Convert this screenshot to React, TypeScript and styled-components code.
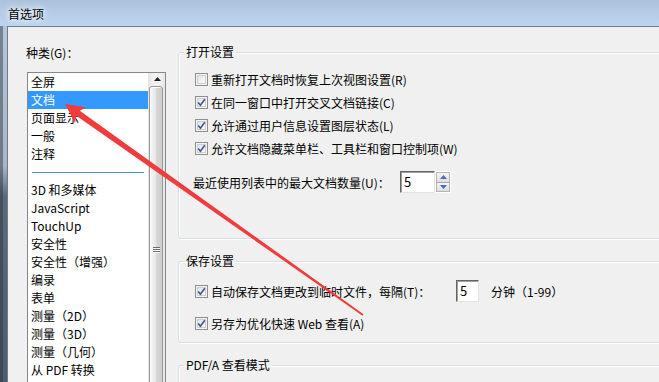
import React from 'react'
import styled, { createGlobalStyle } from 'styled-components'

const GlobalStyle = createGlobalStyle`
  html, body {
    margin: 0;
    padding: 0;
    overflow: hidden;
  }
  body {
    font-family: "Segoe UI", "Noto Sans CJK SC", sans-serif;
    font-size: 12px;
    color: #000;
  }
`

const categories = [
  '全屏',
  '文档',
  '页面显示',
  '一般',
  '注释',
  '-',
  '3D 和多媒体',
  'JavaScript',
  'TouchUp',
  '安全性',
  '安全性（增强）',
  '编录',
  '表单',
  '测量（2D）',
  '测量（3D）',
  '测量（几何）',
  '从 PDF 转换',
]

const openOptions = [
  { label: '重新打开文档时恢复上次视图设置(R)', checked: false },
  { label: '在同一窗口中打开交叉文档链接(C)', checked: true },
  { label: '允许通过用户信息设置图层状态(L)', checked: true },
  { label: '允许文档隐藏菜单栏、工具栏和窗口控制项(W)', checked: true },
]

const CheckBox: React.FC<{ checked: boolean }> = ({ checked }) => (
  <Box>
    {checked && (
      <svg width="9" height="9" viewBox="0 0 9 9">
        <path d="M1.2 4.6 L3.4 7.2 L7.8 1.2" fill="none" stroke="#3d5694" strokeWidth="1.6" />
      </svg>
    )}
  </Box>
)

const Spinner: React.FC = () => (
  <SpinBox>
    <SpinButton>
      <svg width="7" height="4" viewBox="0 0 7 4"><path d="M0 4 L3.5 0 L7 4 Z" fill="#5068b8" /></svg>
    </SpinButton>
    <SpinButton>
      <svg width="7" height="4" viewBox="0 0 7 4"><path d="M0 0 L3.5 4 L7 0 Z" fill="#5068b8" /></svg>
    </SpinButton>
  </SpinBox>
)

const App: React.FC = () => {
  return (
    <Window>
      <GlobalStyle />
      <TitleBar>
        <Title>首选项</Title>
      </TitleBar>
      <Body>
        <FrameEdge />
        <Client>
          <LeftColumn>
            <CategoryLabel>种类(G)：</CategoryLabel>
            <ListBox>
              <ListItems>
                {categories.map((c, i) =>
                  c === '-' ? (
                    <Separator key={i} />
                  ) : (
                    <ListItem key={i} $selected={c === '文档'}>{c}</ListItem>
                  )
                )}
              </ListItems>
              <ScrollBar>
                <ScrollButton>
                  <svg width="7" height="4" viewBox="0 0 7 4"><path d="M0 4 L3.5 0 L7 4 Z" fill="#202020" /></svg>
                </ScrollButton>
                <Thumb>
                  <Grip><span /><span /><span /></Grip>
                </Thumb>
              </ScrollBar>
            </ListBox>
          </LeftColumn>

          <RightColumn>
            <Group>
              <Legend>打开设置</Legend>
              <GroupInner $top={8} $bottom={45}>
                {openOptions.map((o) => (
                  <CheckRow key={o.label}>
                    <CheckBox checked={o.checked} />
                    <span>{o.label}</span>
                  </CheckRow>
                ))}
                <FieldRow>
                  <FieldLabel>最近使用列表中的最大文档数量(U)：</FieldLabel>
                  <NumberBox $width={35}>5</NumberBox>
                  <Spinner />
                </FieldRow>
              </GroupInner>
            </Group>

            <Group>
              <Legend>保存设置</Legend>
              <GroupInner $top={10} $bottom={7}>
                <SaveRow>
                  <SaveLabel>
                    <CheckBox checked />
                    <span>自动保存文档更改到临时文件，每隔(T)：</span>
                  </SaveLabel>
                  <NumberBox $width={23}>5</NumberBox>
                  <Unit>分钟（1-99）</Unit>
                </SaveRow>
                <CheckRow>
                  <CheckBox checked />
                  <span>另存为优化快速 Web 查看(A)</span>
                </CheckRow>
              </GroupInner>
            </Group>

            <Group>
              <Legend>PDF/A 查看模式</Legend>
              <GroupInner $top={10} $bottom={40} />
            </Group>
          </RightColumn>
        </Client>
      </Body>

      <ArrowLayer width="659" height="382" viewBox="0 0 659 382">
        <polygon
          points="65,104 86.5,107.5 79.8,110.8 363.5,314.3 362.5,315.7 76.3,115.7 75,123"
          fill="#f03c3c"
        />
      </ArrowLayer>
    </Window>
  )
}

export default App

const Window = styled.div`
  position: relative;
  width: 100vw;
  height: 100vh;
  overflow: hidden;
  display: flex;
  flex-direction: column;
  background: #f0f0f0;
`

const TitleBar = styled.div`
  height: 26px;
  flex-shrink: 0;
  display: flex;
  align-items: center;
  padding-left: 8px;
  background: linear-gradient(to bottom, #abc2da 0%, #b5cce6 45%, #bdd4ee 100%);
`

const Title = styled.div`
  font-size: 12px;
  line-height: 16px;
  color: #000;
  text-shadow: 0 0 5px #fff, 0 0 8px #fff;
  margin-top: 1px;
`

const Body = styled.div`
  flex: 1;
  display: flex;
`

const FrameEdge = styled.div`
  width: 7px;
  flex-shrink: 0;
  background: linear-gradient(to bottom, #b4c6d8 0%, #a9b6c3 140px, #5b6a78 170px, #4b5966 100%);
  box-shadow: inset 3px 0 0 rgba(40, 50, 60, 0.45);
`

const Client = styled.div`
  flex: 1;
  display: flex;
  align-items: flex-start;
  gap: 12px;
  padding: 17px 0 0 19px;
  border-top: 1px solid #6c7c8c;
  border-left: 1px solid #6c7c8c;
  background: #f0f0f0;
`

const LeftColumn = styled.div`
  display: flex;
  flex-direction: column;
  width: 139px;
  flex-shrink: 0;
`

const CategoryLabel = styled.div`
  height: 16px;
  line-height: 16px;
  margin: 1px 0 11px -1px;
`

const ListBox = styled.div`
  display: flex;
  height: 340px;
  background: #fff;
  border: 1px solid #828790;
  overflow: hidden;
`

const ListItems = styled.div`
  width: 120px;
  display: flex;
  flex-direction: column;
`

const ListItem = styled.div<{ $selected?: boolean }>`
  height: 18px;
  line-height: 18px;
  padding-left: 3px;
  white-space: nowrap;
  background: ${(p) => (p.$selected ? '#3399ff' : 'transparent')};
  color: ${(p) => (p.$selected ? '#fff' : '#000')};
`

const Separator = styled.div`
  height: 18px;
  display: flex;
  align-items: center;
  padding: 0 4px;

  &::after {
    content: '';
    flex: 1;
    height: 1px;
    background: #4a90dc;
  }
`

const ScrollBar = styled.div`
  width: 17px;
  display: flex;
  flex-direction: column;
  background: linear-gradient(to right, #e3e3e3, #f1f1f1 30%, #f1f1f1 70%, #e6e6e6);
`

const ScrollButton = styled.div`
  height: 18px;
  display: flex;
  align-items: center;
  justify-content: center;
  padding-left: 1px;
`

const Thumb = styled.div`
  margin: 1px 2px 0 1px;
  height: 494px;
  border: 1px solid #989898;
  border-radius: 3px;
  background: linear-gradient(to right, #f6f6f6, #e9e9e9 45%, #d6d6d6 55%, #cdcdcd);
  box-shadow: inset 1px 1px 0 #fff;
  display: flex;
  align-items: center;
  justify-content: center;
`

const Grip = styled.div`
  display: flex;
  flex-direction: column;
  gap: 1px;

  span {
    display: block;
    width: 7px;
    height: 1px;
    background: #6e6e6e;
    box-shadow: 0 1px 0 #f8f8f8;
  }
`

const RightColumn = styled.div`
  flex: 1;
  margin-right: -30px;
  display: flex;
  flex-direction: column;
  gap: 14px;
`

const Group = styled.fieldset`
  margin: 0;
  padding: 0;
  min-width: 0;
  border: 1px solid #d5dfe5;
  border-radius: 3px;
  box-shadow: inset 1px 1px 0 #fff, 1px 1px 0 #fff;
`

const Legend = styled.legend`
  margin-left: 5px;
  padding: 0 2px;
  height: 16px;
  line-height: 16px;
  font-size: 12px;
`

const GroupInner = styled.div<{ $top: number; $bottom: number }>`
  display: flex;
  flex-direction: column;
  padding: ${(p) => p.$top}px 0 ${(p) => p.$bottom}px 16px;
`

const CheckRow = styled.div`
  height: 23px;
  display: flex;
  align-items: center;
  gap: 2px;
  white-space: nowrap;
`

const Box = styled.span`
  width: 13px;
  height: 13px;
  box-sizing: border-box;
  flex-shrink: 0;
  border: 1px solid #8e8f8f;
  background: linear-gradient(135deg, #dcdcdc, #f4f4f4 60%, #fdfdfd);
  box-shadow: inset 0 0 0 1px #f4f4f4, inset 0 0 0 2px #cfcfcf;
  display: flex;
  align-items: center;
  justify-content: center;
  margin-right: 1px;
`

const FieldRow = styled.div`
  height: 22px;
  margin-top: 11px;
  display: flex;
  align-items: center;
`

const FieldLabel = styled.span`
  width: 207px;
  margin-left: -2px;
  white-space: nowrap;
`

const NumberBox = styled.div<{ $width: number }>`
  width: ${(p) => p.$width}px;
  height: 22px;
  box-sizing: border-box;
  padding-left: 3px;
  line-height: 19px;
  font-size: 13px;
  background: #fff;
  border: 1px solid;
  border-color: #646464 #e3e3e3 #e3e3e3 #646464;
  box-shadow: inset 1px 1px 0 #a0a0a0;
`

const SpinBox = styled.div`
  width: 16px;
  height: 22px;
  display: flex;
  flex-direction: column;
  box-sizing: border-box;
  border: 1px solid #fff;
  outline: 1px solid #b5b5b5;
  outline-offset: -2px;
`

const SpinButton = styled.div`
  flex: 1;
  display: flex;
  align-items: center;
  justify-content: center;
  background: linear-gradient(to bottom, #f4f4f4, #dedede);
  border: 1px solid #a9a9a9;

  & + & {
    border-top: none;
  }
`

const SaveRow = styled.div`
  height: 24px;
  display: flex;
  align-items: center;
  margin-bottom: 9px;
`

const SaveLabel = styled.div`
  width: 261px;
  display: flex;
  align-items: center;
  gap: 2px;
  white-space: nowrap;
`

const Unit = styled.span`
  margin-left: 12px;
  white-space: nowrap;
`

const ArrowLayer = styled.svg`
  position: absolute;
  left: 0;
  top: 0;
  pointer-events: none;
`
